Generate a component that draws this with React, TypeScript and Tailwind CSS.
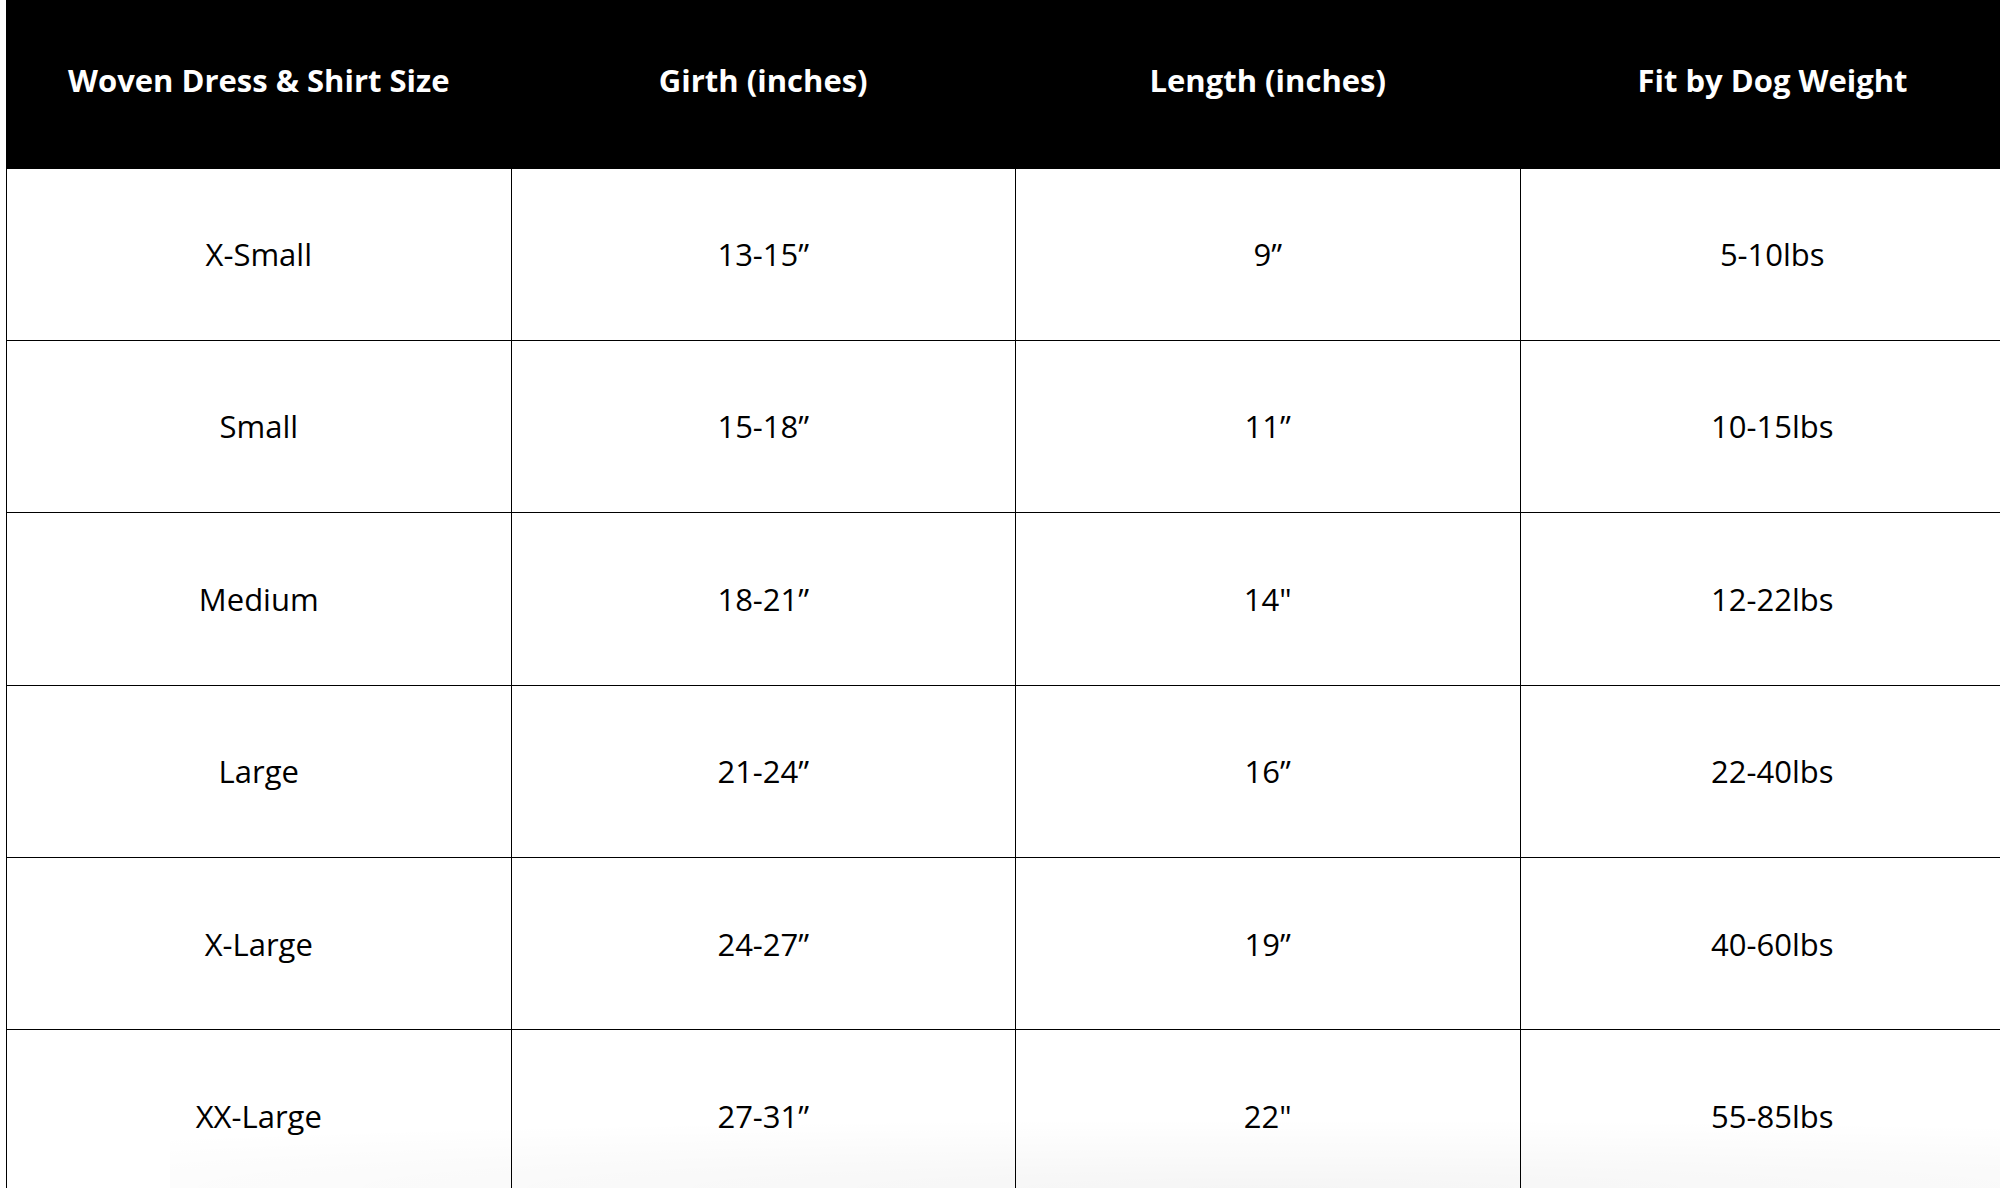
import React from "react";

// Size chart for woven dresses & shirts
const rows: [string, string, string, string][] = [
  ["X-Small", "13-15\u201D", "9\u201D", "5-10lbs"],
  ["Small", "15-18\u201D", "11\u201D", "10-15lbs"],
  ["Medium", "18-21\u201D", "14\"", "12-22lbs"],
  ["Large", "21-24\u201D", "16\u201D", "22-40lbs"],
  ["X-Large", "24-27\u201D", "19\u201D", "40-60lbs"],
  ["XX-Large", "27-31\u201D", "22\"", "55-85lbs"],
];

const headers = ["Woven Dress & Shirt Size", "Girth (inches)", "Length (inches)", "Fit by Dog Weight"];

export default function App() {
  return (
    <div className="relative h-[1188px] w-[2000px] overflow-hidden bg-white pl-[6px] font-['Open_Sans',sans-serif] text-black">
      <table className="w-[2018px] table-fixed border-collapse">
        <thead>
          <tr className="h-[168px] bg-black">
            {headers.map((h) => (
              <th key={h} className="w-[504.5px] border-l border-black pb-[7px] text-center text-[31px] font-bold text-white">
                {h}
              </th>
            ))}
          </tr>
        </thead>
        <tbody>
          {rows.map((r) => (
            <tr key={r[0]} className="h-[172.4px]">
              {r.map((c, i) => (
                <td key={i} className="border border-black text-center text-[31px] font-normal">
                  {c}
                </td>
              ))}
            </tr>
          ))}
        </tbody>
      </table>

      {/* faint fade at the bottom of the page */}
      <div className="pointer-events-none absolute bottom-0 left-[170px] right-0 h-[70px] bg-[radial-gradient(ellipse_90%_100%_at_60%_100%,rgba(0,0,0,0.04),rgba(0,0,0,0))]" />
    </div>
  );
}
